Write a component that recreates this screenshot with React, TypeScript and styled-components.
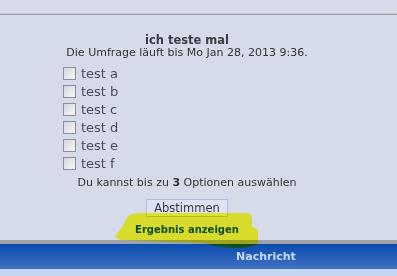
import React from "react";
import styled, { createGlobalStyle } from "styled-components";

const options = ["test a", "test b", "test c", "test d", "test e", "test f"];

function App() {
  return (
    <Page>
      <GlobalStyle />
      <TopStrip />
      <Poll>
        <PollTitle>ich teste mal</PollTitle>
        <PollEnds>Die Umfrage läuft bis Mo Jan 28, 2013 9:36.</PollEnds>
        <OptionList>
          {options.map((label) => (
            <OptionRow key={label}>
              <Box type="checkbox" />
              <OptionLabel>{label}</OptionLabel>
            </OptionRow>
          ))}
        </OptionList>
        <Hint>
          Du kannst bis zu <b>3</b> Optionen auswählen
        </Hint>
        <VoteButton type="button">Abstimmen</VoteButton>
        <ResultLink href="#">Ergebnis anzeigen</ResultLink>
      </Poll>
      <HeadBar>
        <HeadCell>Nachricht</HeadCell>
      </HeadBar>
      <RowBelow />
      <Marker viewBox="0 0 150 42" width="150" height="42">
        <path d="M16 6 Q20 3 30 3 L136 3 Q140 4 140 10 L140 17 Q146 18 146 22 L146 34 Q140 38 124 38 Q104 37 92 33 L10 30 Q2 29 4 25 Q10 18 16 6 Z" />
      </Marker>
    </Page>
  );
}

const GlobalStyle = createGlobalStyle`
  html, body {
    margin: 0;
    padding: 0;
    background: #d6dbe9;
  }
`;

const Page = styled.div`
  position: relative;
  width: 397px;
  height: 276px;
  overflow: hidden;
  background: #d6dbe9;
  font-family: "DejaVu Sans", Verdana, sans-serif;
  color: #333;
`;

const TopStrip = styled.div`
  height: 13px;
  border-bottom: 1px solid #c4c6ce;
  box-shadow: 0 1px 0 #9fa1aa;
`;

const Poll = styled.div`
  width: 374px;
  display: flex;
  flex-direction: column;
  align-items: center;
  padding-top: 18px;
`;

const PollTitle = styled.div`
  font-weight: bold;
  font-size: 11.5px;
  line-height: 16px;
  color: #3a3d46;
`;

const PollEnds = styled.div`
  font-size: 11px;
  line-height: 13px;
  color: #333;
  margin-top: -2px;
`;

const OptionList = styled.div`
  align-self: flex-start;
  margin-left: 63px;
  margin-top: 5px;
  display: flex;
  flex-direction: column;
`;

const OptionRow = styled.label`
  display: flex;
  align-items: center;
  height: 18px;
`;

const Box = styled.input`
  appearance: none;
  margin: 0 5px 0 0;
  width: 13px;
  height: 13px;
  border: 1px solid #8d8f96;
  background: linear-gradient(135deg, #d4d6dc, #f6f6f8);
  box-sizing: border-box;
`;

const OptionLabel = styled.span`
  font-size: 13px;
  color: #4a4c55;
`;

const Hint = styled.div`
  font-size: 11px;
  line-height: 13px;
  margin-top: 4px;
  color: #333;
`;

const VoteButton = styled.button`
  margin-top: 10px;
  width: 82px;
  height: 18px;
  padding: 0;
  border: 1px solid #b4bfd6;
  background: #dbe3f4;
  font-family: "DejaVu Sans", Verdana, sans-serif;
  font-size: 11.5px;
  color: #3a3a44;
`;

const ResultLink = styled.a`
  margin-top: 6px;
  font-weight: bold;
  font-size: 10px;
  line-height: 13px;
  color: #0e4c8a;
  text-decoration: none;
`;

const HeadBar = styled.div`
  margin-top: 4px;
  height: 25px;
  border-top: 4px solid #9da2ad;
  background: linear-gradient(#0a4cae, #2a62bb 60%, #4272c2);
  display: flex;
  align-items: center;
`;

const HeadCell = styled.div`
  margin-left: 236px;
  font-weight: bold;
  font-size: 11px;
  color: #c8dcf8;
`;

const RowBelow = styled.div`
  height: 10px;
  background: #c6d6f0;
`;

const Marker = styled.svg`
  position: absolute;
  left: 112px;
  top: 210px;
  mix-blend-mode: multiply;
  fill: #ffff30;
`;

export default App;
